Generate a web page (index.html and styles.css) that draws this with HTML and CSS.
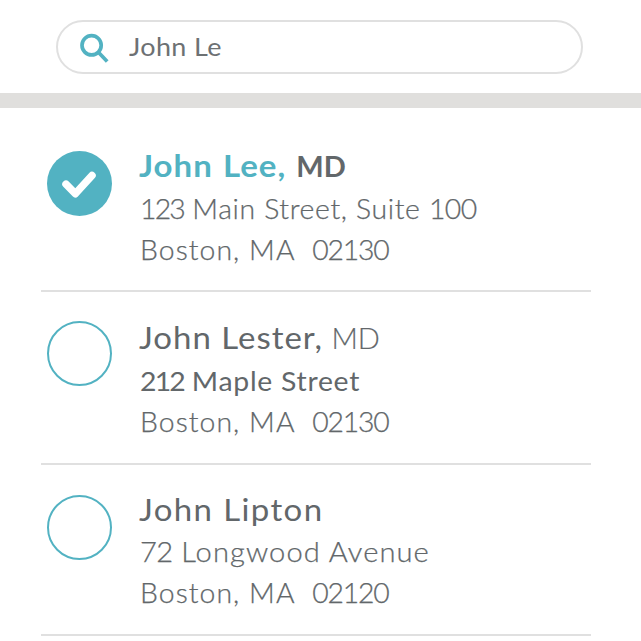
FILE: index.html
```html
<!DOCTYPE html>
<html lang="en">
<head>
<meta charset="utf-8">
<title>Find a doctor</title>
<link rel="stylesheet" href="styles.css">
</head>
<body>
<header class="top">
  <div class="search">
    <svg class="search-icon" viewBox="0 0 30 30" width="30" height="30"><circle cx="12.6" cy="12.3" r="9.6"/><path d="M19.4 19.3 L28.2 28.5"/></svg>
    <span class="query">John Le</span>
  </div>
</header>
<main class="list">
  <article class="row">
    <svg class="mark" viewBox="0 0 65 65" width="65" height="65"><circle class="disc" cx="32.5" cy="32.5" r="32.5"/><path class="tick" d="M19 33.2 L28.3 42.7 L45 24.5"/></svg>
    <div class="info">
      <h2 class="name chosen"><span class="teal">John Lee,</span> <span class="degree">MD</span></h2>
      <p class="line suite"><span class="num">123</span> Main Street, Suite <span class="unit">100</span></p>
      <p class="line city">Boston, MA&nbsp; <span class="zip">02130</span></p>
    </div>
  </article>
  <article class="row second">
    <svg class="mark" viewBox="0 0 65 65" width="65" height="65"><circle class="ring" cx="32.5" cy="32.5" r="31.5"/></svg>
    <div class="info">
      <h2 class="name">John Lester, <span class="degree light">MD</span></h2>
      <p class="line match"><span class="num">212</span> Maple Street</p>
      <p class="line city">Boston, MA&nbsp; <span class="zip">02130</span></p>
    </div>
  </article>
  <article class="row third">
    <svg class="mark" viewBox="0 0 65 65" width="65" height="65"><circle class="ring" cx="32.5" cy="32.5" r="31.5"/></svg>
    <div class="info">
      <h2 class="name plain">John Lipton</h2>
      <p class="line avenue"><span class="num">72</span> Longwood Avenue</p>
      <p class="line city">Boston, MA&nbsp; <span class="zip">02120</span></p>
    </div>
  </article>
</main>
</body>
</html>
```

FILE: styles.css
```css
* { box-sizing: border-box; }
body {
  margin: 0;
  height: 641px;
  overflow: hidden;
  background: #fff;
  color: #62676a;
  font-family: Lato, "Liberation Sans", sans-serif;
}
.top {
  height: 108px;
  padding: 20px 58px 0 56px;
  border-bottom: 15px solid #e0dfdd;
}
.search {
  display: flex;
  align-items: center;
  height: 54px;
  padding-left: 21px;
  border: 2px solid #e0e0e0;
  border-radius: 27px;
}
.search-icon {
  margin-top: 2px;
  fill: none;
  stroke: #52b2c2;
  stroke-width: 3.7;
}
.query {
  margin-left: 20px;
  font-size: 24.5px;
  line-height: 30px;
  letter-spacing: 0.35px;
  color: #6d7173;
  transform: scaleX(1.1);
  transform-origin: left;
}
.list { padding: 0 50px 0 41px; }
.row {
  display: flex;
  height: 184px;
  padding: 43px 0 0 6px;
  border-bottom: 2px solid #e0e0e0;
}
.row.second { height: 173px; padding-top: 29px; }
.row.third { height: 171px; padding-top: 30px; }
.mark { flex: none; }
.disc { fill: #52b2c2; }
.tick {
  fill: none;
  stroke: #fff;
  stroke-width: 7.5;
  stroke-linecap: round;
  stroke-linejoin: round;
}
.ring { fill: none; stroke: #52b2c2; stroke-width: 2; }
.info { margin: -6px 0 0 27px; white-space: nowrap; }
.second .info { margin-top: -4px; }
.third .info { margin-top: -6px; }
.name {
  height: 41px;
  margin: 0 0 3px;
  font-size: 30px;
  line-height: 41px;
  font-weight: 400;
  letter-spacing: 0.9px;
  transform: scaleX(1.1);
  transform-origin: left;
}
.plain { margin-bottom: 2px; letter-spacing: 1.25px; }
.chosen { font-weight: 700; word-spacing: 1px; }
.teal { color: #52b2c2; }
.degree {
  display: inline-block;
  font-size: 29px;
  line-height: 30px;
  letter-spacing: 0;
  transform: scaleX(0.91);
  transform-origin: left;
}
.light { font-weight: 300; margin-left: -1px; -webkit-text-stroke: 0.2px #62676a; }
.line {
  margin: 0 0 0 1px;
  font-size: 26.5px;
  line-height: 41px;
  font-weight: 300;
  -webkit-text-stroke: 0.25px #62676a;
  transform: scaleX(1.07);
  transform-origin: left;
}
.suite { letter-spacing: 0.62px; }
.city { letter-spacing: 1px; }
.match { font-weight: 400; letter-spacing: 0.68px; -webkit-text-stroke: 0; }
.avenue { letter-spacing: 0.95px; transform: scaleX(1.1); }
.num { letter-spacing: -1.7px; }
.avenue .num { letter-spacing: -0.7px; }
.unit { letter-spacing: -0.5px; }
.zip { letter-spacing: -1.1px; }
```
